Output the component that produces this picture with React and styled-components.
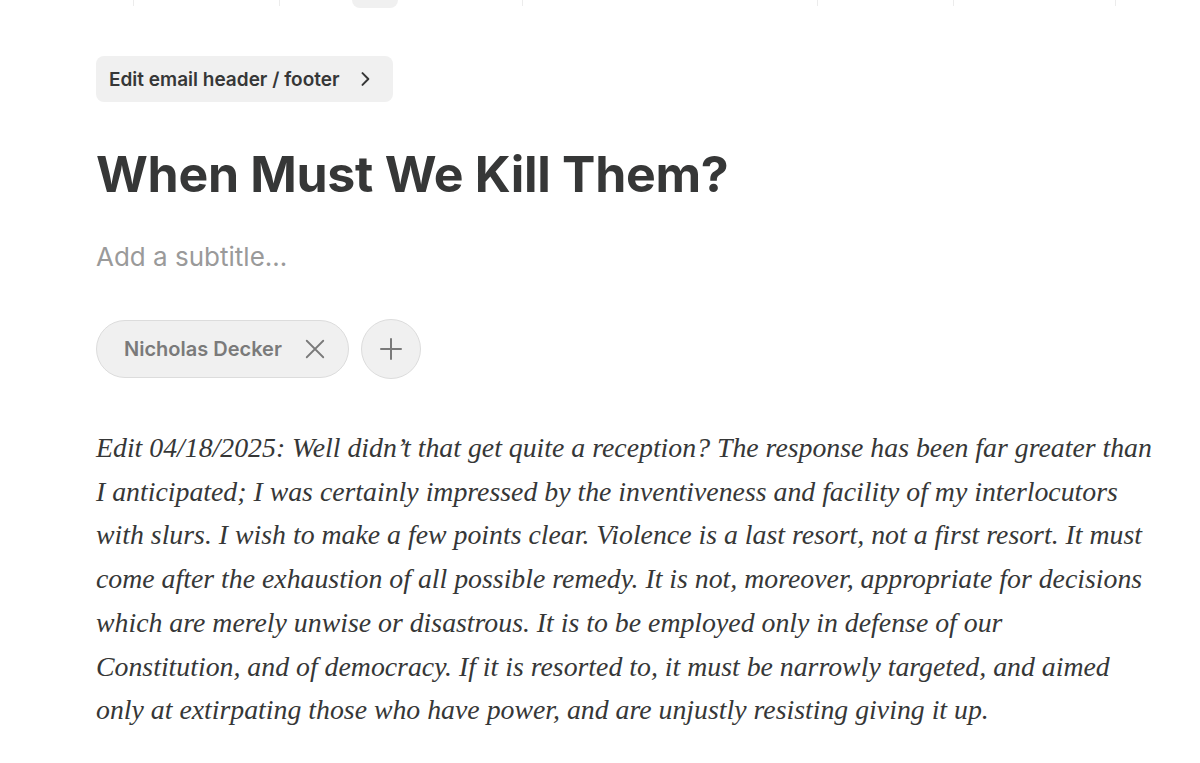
import React from 'react';
import styled, { createGlobalStyle } from 'styled-components';

const GlobalStyle = createGlobalStyle`
	html, body {
		margin: 0;
		padding: 0;
		background: #fff;
	}
	body {
		font-family: Inter, 'Noto Sans', sans-serif;
		color: #363737;
	}
`;

const toolGroups = [134, 146, 243, 295, 136, 162];

const bodyLines = [
	'Edit 04/18/2025: Well didn’t that get quite a reception? The response has been far greater than',
	'I anticipated; I was certainly impressed by the inventiveness and facility of my interlocutors',
	'with slurs. I wish to make a few points clear. Violence is a last resort, not a first resort. It must',
	'come after the exhaustion of all possible remedy. It is not, moreover, appropriate for decisions',
	'which are merely unwise or disastrous. It is to be employed only in defense of our',
	'Constitution, and of democracy. If it is resorted to, it must be narrowly targeted, and aimed',
	'only at extirpating those who have power, and are unjustly resisting giving it up.',
];

const App = () => {
	return (
		<>
			<GlobalStyle />
			<Toolbar>
				{toolGroups.map((w, i) => (
					<ToolGroup key={i} $width={w}>
						{i === 2 && <ActiveTool />}
					</ToolGroup>
				))}
			</Toolbar>
			<Editor>
				<HeaderButton>
					Edit email header / footer
					<svg width='20' height='20' viewBox='0 0 24 24' fill='none' stroke='#363737' strokeWidth='2.4' strokeLinecap='round' strokeLinejoin='round'>
						<path d='M9 5l7 7-7 7' />
					</svg>
				</HeaderButton>
				<Title>When Must We Kill Them?</Title>
				<Subtitle>Add a subtitle…</Subtitle>
				<Bylines>
					<AuthorChip>
						Nicholas Decker
						<svg width='22' height='22' viewBox='0 0 24 24' fill='none' stroke='#7a7a7a' strokeWidth='2' strokeLinecap='round'>
							<path d='M3 3l18 18M21 3L3 21' />
						</svg>
					</AuthorChip>
					<AddButton>
						<svg width='24' height='24' viewBox='0 0 24 24' fill='none' stroke='#7a7a7a' strokeWidth='2' strokeLinecap='round'>
							<path d='M12 2v20M2 12h20' />
						</svg>
					</AddButton>
				</Bylines>
				<Body>
					{bodyLines.map((line, i) => (
						<React.Fragment key={i}>
							{line}
							{i < bodyLines.length - 1 && <br />}
						</React.Fragment>
					))}
				</Body>
			</Editor>
		</>
	);
};

const Toolbar = styled.div`
	display: flex;
	height: 8px;
	overflow: hidden;
`;

const ToolGroup = styled.div`
	width: ${(p) => p.$width}px;
	flex-shrink: 0;
	border-right: 1px solid #ececec;
	height: 6px;
	box-sizing: border-box;
	padding-left: 72px;
`;

const ActiveTool = styled.div`
	width: 46px;
	height: 8px;
	background: #f0f0f0;
	border-radius: 0 0 8px 8px;
`;

const Editor = styled.main`
	padding: 48px 0 0 96px;
	width: 1090px;
`;

const HeaderButton = styled.button`
	display: inline-flex;
	align-items: center;
	gap: 15px;
	height: 46px;
	padding: 0 18px 0 13px;
	border: none;
	border-radius: 8px;
	background: #f0f0f0;
	font-family: Inter, 'Noto Sans', sans-serif;
	font-size: 19px;
	font-weight: 600;
	color: #363737;
`;

const Title = styled.h1`
	margin: 42px 0 0;
	font-size: 50px;
	font-weight: 700;
	letter-spacing: -0.3px;
	line-height: 60px;
	color: #363737;
`;

const Subtitle = styled.div`
	margin-top: 37px;
	font-size: 26px;
	font-weight: 400;
	color: #9a9a9a;
	line-height: 32px;
`;

const Bylines = styled.div`
	display: flex;
	align-items: center;
	gap: 12px;
	margin-top: 46px;
`;

const AuthorChip = styled.div`
	display: flex;
	align-items: center;
	gap: 22px;
	height: 58px;
	box-sizing: border-box;
	padding: 0 22px 0 27px;
	border: 1px solid #dcdcdc;
	border-radius: 29px;
	background: #f0f0f0;
	font-size: 20px;
	font-weight: 600;
	color: #7a7a7a;
`;

const AddButton = styled.div`
	display: flex;
	align-items: center;
	justify-content: center;
	width: 60px;
	height: 60px;
	box-sizing: border-box;
	border: 1px solid #dcdcdc;
	border-radius: 50%;
	background: #f0f0f0;
`;

const Body = styled.p`
	margin: 47px 0 0;
	font-family: 'Liberation Serif', serif;
	font-style: italic;
	font-size: 27.8px;
	line-height: 43.7px;
	color: #363737;
	white-space: nowrap;
`;

export default App;
